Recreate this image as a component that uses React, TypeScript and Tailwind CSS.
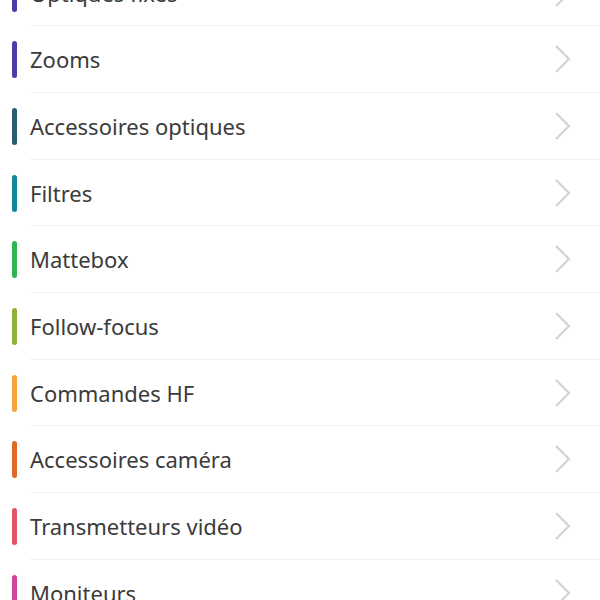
import { ChevronRight } from "lucide-react";

const categories = [
  { label: "Optiques fixes", color: "bg-[#4a3da8]" },
  { label: "Zooms", color: "bg-[#4a3da8]" },
  { label: "Accessoires optiques", color: "bg-[#275d6f]" },
  { label: "Filtres", color: "bg-[#12879a]" },
  { label: "Mattebox", color: "bg-[#2fb552]" },
  { label: "Follow-focus", color: "bg-[#8fb23a]" },
  { label: "Commandes HF", color: "bg-[#f4a43c]" },
  { label: "Accessoires caméra", color: "bg-[#e06a24]" },
  { label: "Transmetteurs vidéo", color: "bg-[#e15464]" },
  { label: "Moniteurs", color: "bg-[#d0449b]" },
];

export default function App() {
  return (
    <div className="h-[600px] w-[600px] overflow-hidden bg-white font-['Noto_Sans',sans-serif]">
      <ul className="-mt-[40.2px]">
        {categories.map((c) => (
          <li key={c.label} className="flex h-[66.67px] items-center">
            <span className={`ml-3 h-[37px] w-[5px] shrink-0 rounded-full ${c.color}`} />
            <div className="ml-[13px] flex h-full flex-1 items-center border-b border-[#f0f0f0]">
              <span className="flex-1 pt-px text-[22px] text-[#3b3b3b]">{c.label}</span>
              <svg
                width="18"
                height="30"
                viewBox="0 0 18 30"
                fill="none"
                stroke="#d3d3d3"
                strokeWidth="2.2"
                className="mr-[28px]"
              >
                <path d="M2 2 L15 15 L2 28" />
              </svg>
            </div>
          </li>
        ))}
      </ul>
    </div>
  );
}
